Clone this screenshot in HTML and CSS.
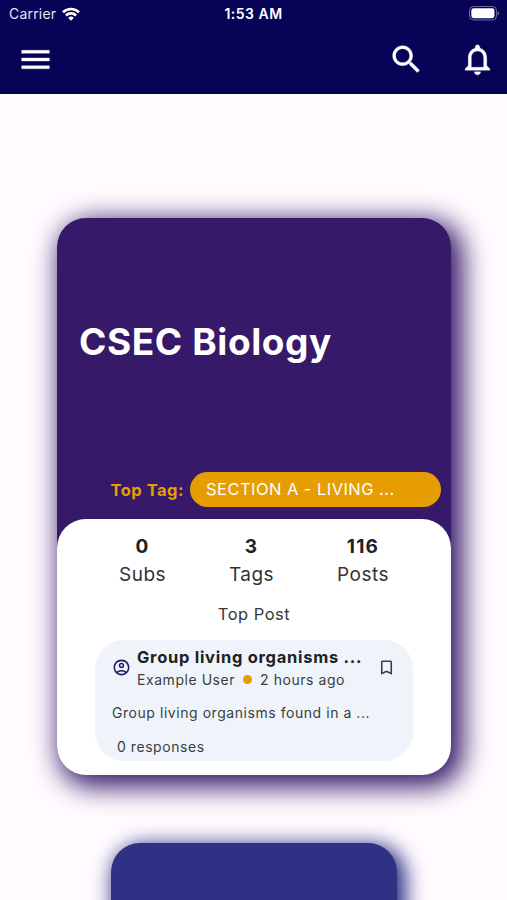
FILE: index.html
```
<!DOCTYPE html>
<html lang="en">
<head>
  <meta charset="UTF-8">
  <meta name="viewport" content="width=device-width, initial-scale=1.0">
  <title>CSEC Biology</title>
  <link rel="stylesheet" href="styles.css">
</head>
<body>
  <header>
    <div class="status-bar">
      <div class="carrier">
        <span>Carrier</span>
        <svg class="wifi" viewBox="0 0 18 14" fill="none" stroke="#fff" stroke-width="2.7">
          <path d="M1 5.2a11.6 11.6 0 0 1 16 0"/>
          <path d="M3.9 8.4a7.4 7.4 0 0 1 10.2 0"/>
          <path d="M9 13.7L6.2 10.9a4 4 0 0 1 5.6 0z" fill="#fff" stroke="none"/>
        </svg>
      </div>
      <span class="time">1:53 AM</span>
      <svg class="battery" viewBox="0 0 31 15">
        <rect x="0.5" y="0.5" width="27" height="13.5" rx="4" fill="none" stroke="#fff" stroke-opacity="0.4"/>
        <rect x="2.3" y="2.3" width="23.2" height="9.9" rx="2.4" fill="#fff"/>
        <path d="M28.8 5.2v4.2c1.7-.8 1.7-3.4 0-4.2z" fill="#fff" fill-opacity="0.5"/>
      </svg>
    </div>
    <nav class="app-bar">
      <svg class="icon" viewBox="0 0 24 24"><path d="M3 18h18v-2H3v2zm0-5h18v-2H3v2zm0-7v2h18V6H3z"/></svg>
      <svg class="icon search" viewBox="0 0 24 24"><path d="M15.5 14h-.79l-.28-.27C15.41 12.59 16 11.11 16 9.5 16 5.91 13.09 3 9.5 3S3 5.91 3 9.5 5.91 16 9.5 16c1.61 0 3.09-.59 4.23-1.57l.27.28v.79l5 4.99L20.49 19l-4.99-5zm-6 0C7.01 14 5 11.99 5 9.5S7.01 5 9.5 5 14 7.01 14 9.5 11.99 14 9.5 14z"/></svg>
      <svg class="icon" viewBox="0 0 24 24"><path d="M12 22c1.1 0 2-.9 2-2h-4c0 1.1.9 2 2 2zm6-6v-5c0-3.07-1.63-5.64-4.5-6.32V4c0-.83-.67-1.5-1.5-1.5s-1.5.67-1.5 1.5v.68C7.64 5.36 6 7.92 6 11v5l-2 2v1h16v-1l-2-2zm-2 1H8v-6c0-2.48 1.51-4.5 4-4.5s4 2.02 4 4.5v6z"/></svg>
    </nav>
  </header>

  <main>
    <section class="card">
      <h1>CSEC Biology</h1>
      <div class="top-tag">
        <span class="top-tag-label">Top Tag:</span>
        <span class="tag">SECTION A - LIVING ...</span>
      </div>
      <div class="panel">
        <div class="stats">
          <div class="stat"><b>0</b><span>Subs</span></div>
          <div class="stat"><b>3</b><span>Tags</span></div>
          <div class="stat"><b>116</b><span>Posts</span></div>
        </div>
        <h2>Top Post</h2>
        <article class="post">
          <div class="post-head">
            <svg class="avatar" viewBox="0 0 24 24"><path d="M12 2C6.48 2 2 6.48 2 12s4.48 10 10 10 10-4.48 10-10S17.52 2 12 2zM7.35 18.5C8.66 17.56 10.26 17 12 17s3.34.56 4.65 1.5C15.34 19.44 13.74 20 12 20s-3.34-.56-4.65-1.5zm10.79-1.38C16.45 15.8 14.32 15 12 15s-4.45.8-6.14 2.12C4.7 15.73 4 13.95 4 12c0-4.42 3.58-8 8-8s8 3.58 8 8c0 1.95-.7 3.73-1.86 5.12z"/><path d="M12 6c-1.93 0-3.5 1.57-3.5 3.5S10.07 13 12 13s3.5-1.57 3.5-3.5S13.93 6 12 6zm0 5c-.83 0-1.5-.67-1.5-1.5S11.17 8 12 8s1.5.67 1.5 1.5S12.83 11 12 11z"/></svg>
            <div class="post-info">
              <h3>Group living organisms ...</h3>
              <div class="meta">
                <span>Example User</span>
                <i class="dot"></i>
                <span>2 hours ago</span>
              </div>
            </div>
            <svg class="bookmark" viewBox="0 0 24 24"><path d="M17 3H7c-1.1 0-2 .9-2 2v16l7-3 7 3V5c0-1.1-.9-2-2-2zm0 15l-5-2.18L7 18V5h10v13z"/></svg>
          </div>
          <p class="excerpt">Group living organisms found in a ...</p>
          <p class="responses">0 responses</p>
        </article>
      </div>
    </section>

    <section class="card next-card"></section>
  </main>
</body>
</html>
```
FILE: styles.css
```
* {
  box-sizing: border-box;
}

body {
  margin: 0;
  height: 900px;
  overflow: hidden;
  background-color: #fffbff;
  color: #202124;
  font-family: Inter, "Liberation Sans", sans-serif;
}

h1, h2, h3, p {
  margin: 0;
}

header {
  height: 94px;
  background-color: #070457;
  color: #fff;
}

.status-bar {
  display: grid;
  grid-template-columns: 1fr auto 1fr;
  align-items: center;
  height: 27px;
  padding: 0 7px 0 9px;
  font-size: 14px;
}

.carrier {
  display: flex;
  align-items: center;
  gap: 6px;
  color: #e2e1f2;
  letter-spacing: 0.2px;
}

.wifi {
  width: 18px;
  height: 14px;
}

.time {
  margin-right: 2px;
  font-weight: 600;
  letter-spacing: 0.5px;
}

.battery {
  width: 31px;
  height: 15px;
  justify-self: end;
}

.app-bar {
  display: flex;
  align-items: center;
  height: 65px;
  padding: 0 11px 0 16.5px;
}

.icon {
  width: 37px;
  height: 37px;
  fill: #fff;
  stroke: #fff;
  stroke-width: 0.2;
}

.search {
  margin-left: auto;
  margin-right: 34px;
}

main {
  display: flex;
  flex-direction: column;
  align-items: center;
  height: 806px;
  gap: 68px;
  padding-top: 124px;
  overflow: hidden;
}

.card {
  display: flex;
  flex-direction: column;
  flex-shrink: 0;
  width: 394px;
  height: 557px;
  margin-left: 1px;
  border-radius: 29px;
  background-color: #361968;
  box-shadow: 7px 7px 27px 5px #361968;
}

.card h1 {
  padding: 101px 0 0 22px;
  color: #fff;
  font-size: 37px;
  line-height: 46px;
  letter-spacing: 0.6px;
}

.top-tag {
  display: flex;
  align-items: center;
  justify-content: flex-end;
  gap: 6px;
  margin-top: 107px;
  padding-right: 10px;
}

.top-tag-label {
  color: #e79e05;
  font-size: 16.5px;
  font-weight: 700;
  letter-spacing: 0.5px;
}

.tag {
  width: 251px;
  height: 35px;
  padding-left: 16px;
  border-radius: 18px;
  background-color: #e59d02;
  color: #fff;
  font-size: 16.5px;
  line-height: 35px;
  letter-spacing: 0.45px;
}

.panel {
  flex: 1;
  margin-top: 12px;
  border-radius: 29px;
  background-color: #fff;
}

.stats {
  display: flex;
  justify-content: space-between;
  padding: 14px 62px 0;
}

.stat {
  display: flex;
  flex-direction: column;
  align-items: center;
  font-size: 19px;
  line-height: 28px;
  letter-spacing: 0.5px;
}

.stat b {
  letter-spacing: 1.2px;
}

.stat span {
  color: #333;
}

.panel h2 {
  margin-top: 13px;
  color: #38383a;
  font-size: 16.5px;
  font-weight: 400;
  line-height: 24px;
  letter-spacing: 0.5px;
  text-align: center;
}

.post {
  width: 318px;
  height: 121px;
  margin: 14px 0 0 38px;
  padding: 5px 17px 0;
  border-radius: 29px;
  background-color: #eef4f9;
  color: #3c3e42;
  font-size: 14px;
  letter-spacing: 0.55px;
}

.post-head {
  display: flex;
  align-items: center;
}

.avatar {
  width: 19px;
  height: 19px;
  fill: #1d1a6c;
}

.post-info {
  margin-left: 6px;
}

.post h3 {
  color: #202124;
  font-size: 16.5px;
  line-height: 24px;
  letter-spacing: 0.72px;
}

.meta {
  display: flex;
  align-items: center;
  line-height: 21px;
}

.dot {
  width: 9px;
  height: 9px;
  margin: 0 8px;
  border-radius: 50%;
  background-color: #e59d02;
}

.bookmark {
  width: 19px;
  height: 19px;
  margin-left: auto;
  fill: #3c3e42;
}

.excerpt {
  margin-top: 13px;
  line-height: 20px;
}

.responses {
  margin-top: 14px;
  padding-left: 5px;
  line-height: 20px;
}

.next-card {
  width: 286px;
  background-color: #303184;
  box-shadow: 5px 5px 20px 4px #303184;
}
```
